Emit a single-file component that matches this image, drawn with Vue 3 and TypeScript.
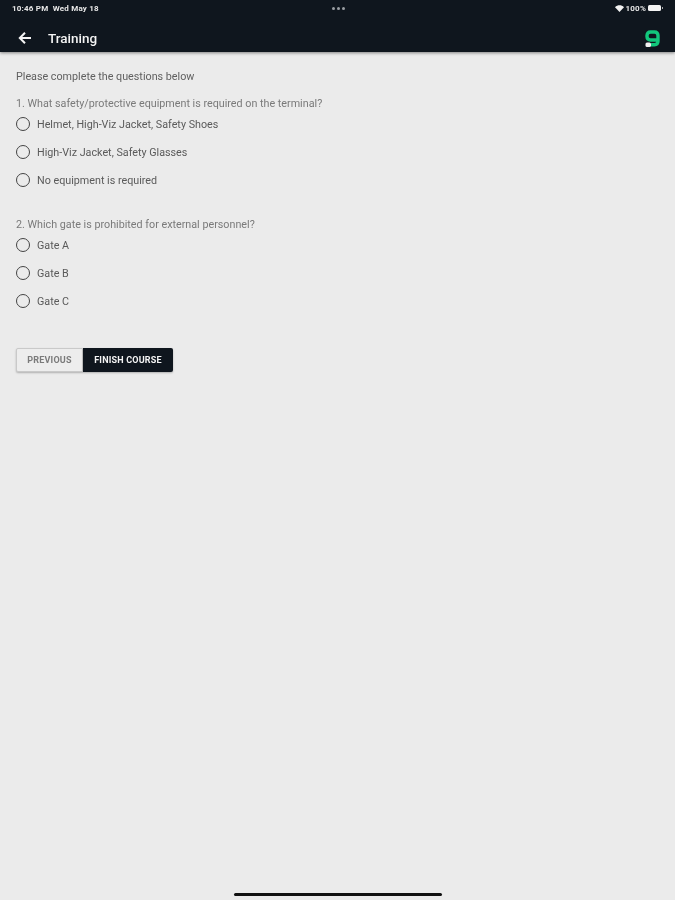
<script setup lang="ts">
interface Question {
  title: string
  options: string[]
}

const questions: Question[] = [
  {
    title: '1. What safety/protective equipment is required on the terminal?',
    options: ['Helmet, High-Viz Jacket, Safety Shoes', 'High-Viz Jacket, Safety Glasses', 'No equipment is required'],
  },
  {
    title: '2. Which gate is prohibited for external personnel?',
    options: ['Gate A', 'Gate B', 'Gate C'],
  },
]
</script>

<template>
  <div class="screen">
    <header class="topbar">
      <div class="status">
        <span class="status-time">10:46 PM &nbsp;Wed May 18</span>
        <span class="status-dots"><i></i><i></i><i></i></span>
        <span class="status-right">
          <svg class="wifi" width="9" height="7" viewBox="0 0 9 7"><path d="M0 2.2C2.6-.4 6.4-.4 9 2.2L4.5 7z" fill="#f2f2f2" /></svg>
          <span>100%</span>
          <span class="battery"></span>
        </span>
      </div>
      <div class="appbar">
        <svg class="back" width="14" height="14" viewBox="0 0 14 14">
          <path d="M13 7H2.5M7 1.8 1.8 7 7 12.2" fill="none" stroke="#f4f4f4" stroke-width="2" />
        </svg>
        <span class="title">Training</span>
        <svg class="logo" width="15" height="17" viewBox="0 0 15 17">
          <path d="M13 10H5.5Q2 10 2 6.5V5.5Q2 2 5.5 2H9.500Q13 2 13 5.500V11Q13 14.700 9.500 14.700H6" fill="none" stroke="#12c77c" stroke-width="3.4" />
          <rect x="0.500" y="12.500" width="5.500" height="4.500" rx="1.500" fill="#f1f1f1" />
        </svg>
      </div>
    </header>

    <main class="content">
      <p class="intro">Please complete the questions below</p>

      <section v-for="q in questions" :key="q.title" class="question">
        <p class="q-title">{{ q.title }}</p>
        <label v-for="opt in q.options" :key="opt" class="option">
          <span class="radio"></span>
          <span>{{ opt }}</span>
        </label>
      </section>

      <div class="actions">
        <button class="btn btn-prev">PREVIOUS</button>
        <button class="btn btn-finish">FINISH COURSE</button>
      </div>
    </main>

    <div class="home-bar"></div>
  </div>
</template>

<style scoped>
.screen {
  height: 900px;
  display: flex;
  flex-direction: column;
  background: #ebebeb;
  font-family: Roboto, "Liberation Sans", sans-serif;
  overflow: hidden;
  filter: blur(0.6px);
}

.topbar {
  height: 52px;
  flex-shrink: 0;
  background: #0f161e;
  box-shadow: 0 1px 3px rgba(0, 0, 0, 0.45);
  color: #f4f4f4;
  display: flex;
  flex-direction: column;
  z-index: 1;
}

.status {
  height: 16px;
  padding: 0 11px 0 12px;
  display: flex;
  align-items: center;
  justify-content: space-between;
  font-size: 8px;
  font-weight: 700;
  letter-spacing: 0.2px;
  color: #e8e8e8;
}

.status-time {
  width: 120px;
}

.status-dots {
  display: flex;
  gap: 2px;
}

.status-dots i {
  width: 3px;
  height: 3px;
  border-radius: 50%;
  background: #9a9ea3;
}

.status-right {
  width: 120px;
  display: flex;
  justify-content: flex-end;
  align-items: center;
  gap: 2px;
}

.wifi {
  margin-right: 0;
}

.battery {
  position: relative;
  width: 13px;
  height: 6px;
  margin-right: 3px;
  border-radius: 1.5px;
  background: #f4f4f4;
}

.battery::after {
  content: "";
  position: absolute;
  left: 14px;
  top: 2px;
  width: 1px;
  height: 2px;
  background: #aaa;
}

.appbar {
  flex: 1;
  display: flex;
  align-items: center;
  padding: 8px 15px 0 18px;
}

.back {
  margin-right: 16px;
}

.title {
  flex: 1;
  font-size: 13.5px;
  font-weight: 500;
  line-height: 16px;
}

.content {
  flex: 1;
  padding: 18px 16px 0;
}

.intro {
  margin: 0;
  font-size: 10.75px;
  line-height: 14px;
  color: #606060;
}

.question {
  margin-top: 12px;
  margin-bottom: 23px;
}

.question + .question {
  margin-top: 0;
}

.q-title {
  margin: 0;
  height: 14px;
  font-size: 10.75px;
  line-height: 16px;
  color: #7a7a7a;
}

.option {
  height: 28px;
  display: flex;
  align-items: center;
  gap: 7px;
  font-size: 10.75px;
  color: #5a5a5a;
}

.radio {
  width: 14px;
  height: 14px;
  box-sizing: border-box;
  border: 1.75px solid #444;
  border-radius: 50%;
  flex-shrink: 0;
}

.actions {
  display: flex;
  margin-top: 33px;
}

.btn {
  height: 24px;
  padding: 0;
  font-family: inherit;
  font-size: 9px;
  font-weight: 700;
  letter-spacing: 0.2px;
  border-radius: 2px;
  box-shadow: 0 1px 2px rgba(0, 0, 0, 0.25);
}

.btn-prev {
  width: 67px;
  background: #ededed;
  color: #7a7a7a;
  border: 1px solid #c9c9c9;
  border-radius: 2px 0 0 2px;
}

.btn-finish {
  width: 90px;
  background: #0f161e;
  color: #f4f4f4;
  border: none;
  border-radius: 0 2px 2px 0;
}

.home-bar {
  position: absolute;
  left: 234px;
  bottom: 4px;
  width: 208px;
  height: 3px;
  border-radius: 2px;
  background: #111;
}
</style>
